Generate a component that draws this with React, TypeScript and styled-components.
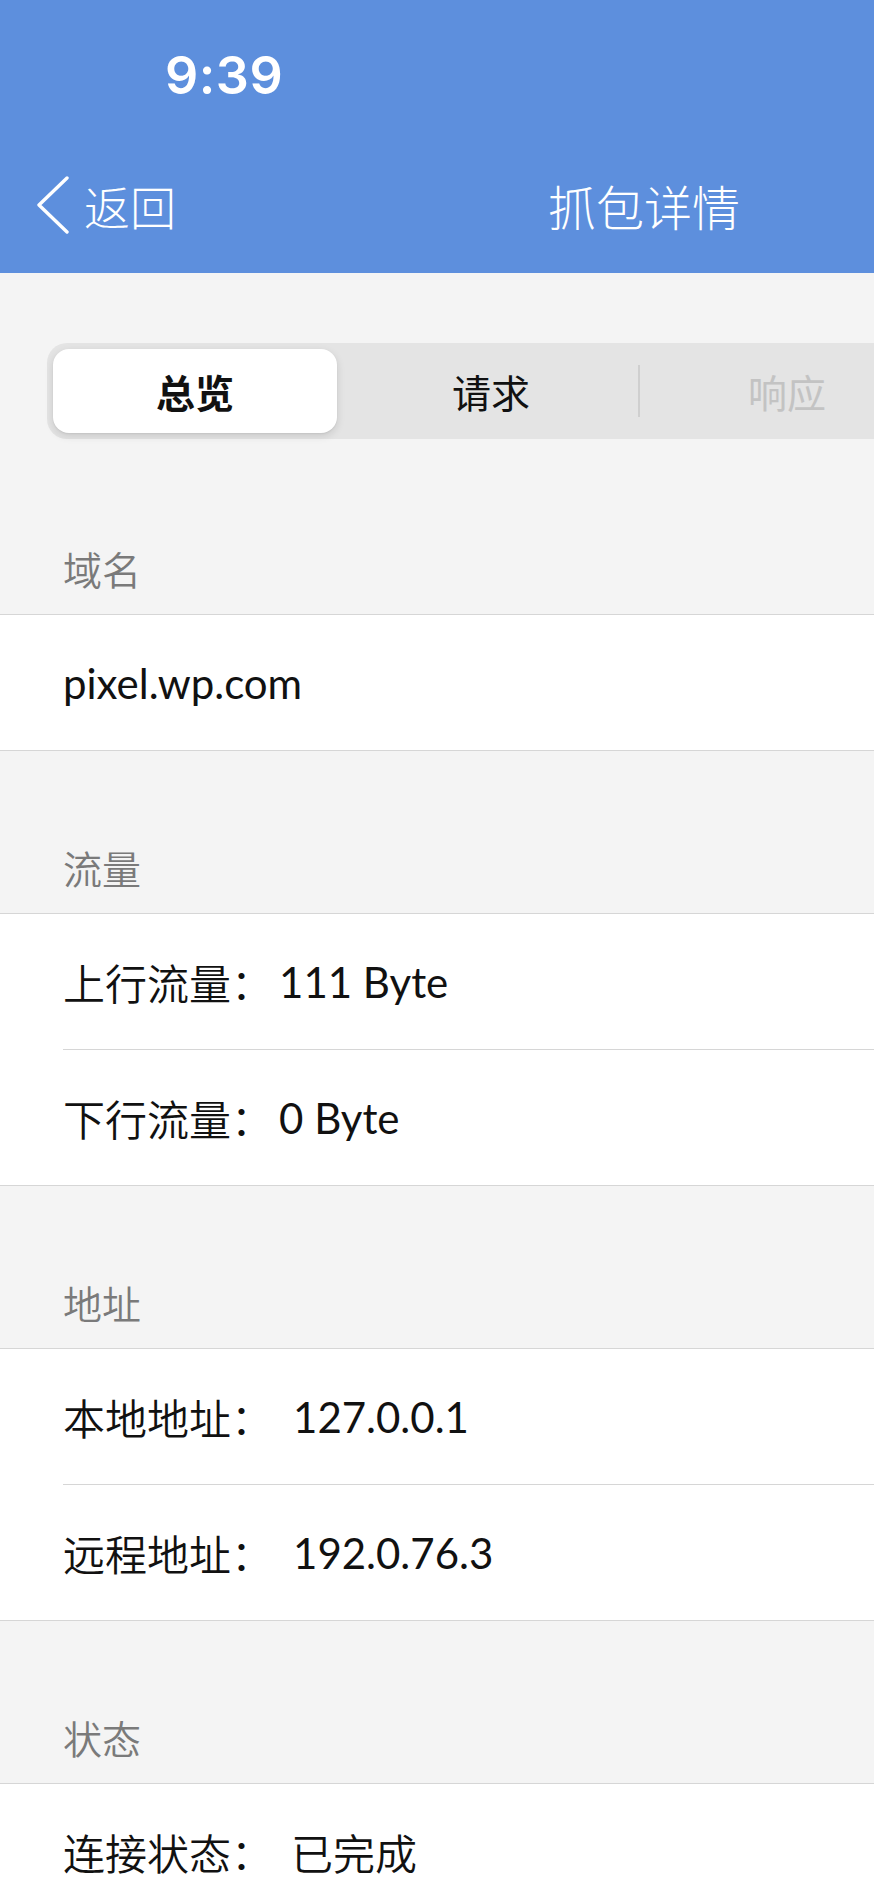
import styled, { createGlobalStyle } from 'styled-components'

const GlobalStyle = createGlobalStyle`
  html, body {
    margin: 0;
    padding: 0;
    background: #f4f4f4;
  }
  body {
    font-family: "Lato", "Noto Sans CJK SC", sans-serif;
    -webkit-font-smoothing: antialiased;
  }
`

const cjk = `"Noto Sans CJK SC", "Noto Sans", sans-serif`

const Page = styled.div`
  width: 874px;
  min-height: 1892px;
  overflow: hidden;
  background: #f4f4f4;
`

const Header = styled.header`
  background: #5d8fdd;
  height: 273px;
  display: flex;
  flex-direction: column;
  color: #fff;
`

const StatusBar = styled.div`
  height: 152px;
  display: flex;
  align-items: center;
  padding-left: 165px;
`

const Time = styled.span`
  font-family: "Inter", sans-serif;
  font-size: 52px;
  font-weight: 600;
  letter-spacing: 0.5px;
  line-height: 1;
`

const NavBar = styled.div`
  height: 106px;
  display: flex;
  align-items: center;
`

const BackButton = styled.div`
  display: flex;
  align-items: center;
  padding-left: 36px;
  gap: 14px;
  font-family: ${cjk};
  font-size: 46px;
  font-weight: 300;
  line-height: 1;
`

const Title = styled.div`
  margin-left: auto;
  margin-right: 134px;
  font-family: ${cjk};
  font-size: 48px;
  font-weight: 300;
  line-height: 1;
`

const Segmented = styled.div`
  margin: 70px 0 13px 47px;
  width: 888px;
  height: 96px;
  box-sizing: border-box;
  padding: 6px 0;
  border-radius: 20px;
  background: #e4e4e4;
  display: grid;
  grid-template-columns: repeat(3, 296px);
  align-items: center;
`

const Segment = styled.div<{ $active?: boolean; $disabled?: boolean; $divider?: boolean }>`
  position: relative;
  height: 84px;
  margin: 0 6px;
  display: flex;
  align-items: center;
  justify-content: center;
  font-family: ${cjk};
  font-size: 39px;
  line-height: 1;
  font-weight: ${(p) => (p.$active ? 700 : 400)};
  color: ${(p) => (p.$disabled ? '#c3c3c3' : '#111')};
  background: ${(p) => (p.$active ? '#fff' : 'transparent')};
  border-radius: 16px;
  box-shadow: ${(p) => (p.$active ? '0 3px 8px rgba(0,0,0,0.12), 0 1px 2px rgba(0,0,0,0.06)' : 'none')};

  &::before {
    content: '';
    display: ${(p) => (p.$divider ? 'block' : 'none')};
    position: absolute;
    left: -7px;
    top: 16px;
    width: 2px;
    height: 52px;
    background: #cfcfcf;
  }
`

const SectionTitle = styled.div`
  height: 162px;
  display: flex;
  align-items: flex-end;
  box-sizing: border-box;
  padding: 0 0 26px 63px;
  font-family: ${cjk};
  font-size: 39px;
  font-weight: 350;
  line-height: 1;
  color: #7a7a7a;
`

const Group = styled.div`
  background: #fff;
  border-top: 1px solid #d6d6d6;
  border-bottom: 1px solid #d6d6d6;
`

const Row = styled.div`
  height: 135px;
  display: flex;
  align-items: center;
  padding-left: 63px;
  font-size: 42px;
  line-height: 1;
  color: #111;

  & + & {
    border-top: 1px solid #d6d6d6;
    margin-left: 63px;
    padding-left: 0;
  }
`

const Label = styled.span`
  font-family: ${cjk};
  font-weight: 350;
`

const Value = styled.span<{ $gap: number; $cjk?: boolean }>`
  margin-left: ${(p) => p.$gap}px;
  font-family: ${(p) => (p.$cjk ? cjk : `"Lato", ${cjk}`)};
  font-weight: ${(p) => (p.$cjk ? 350 : 400)};
`

const sections = [
  { title: '域名', rows: [{ label: '', value: 'pixel.wp.com', gap: 0 }] },
  {
    title: '流量',
    rows: [
      { label: '上行流量：', value: '111 Byte', gap: 6 },
      { label: '下行流量：', value: '0 Byte', gap: 6 },
    ],
  },
  {
    title: '地址',
    rows: [
      { label: '本地地址：', value: '127.0.0.1', gap: 20 },
      { label: '远程地址：', value: '192.0.76.3', gap: 20 },
    ],
  },
  { title: '状态', rows: [{ label: '连接状态：', value: '已完成', gap: 18, cjk: true }] },
]

export default function App() {
  return (
    <Page>
      <GlobalStyle />
      <Header>
        <StatusBar>
          <Time>9:39</Time>
        </StatusBar>
        <NavBar>
          <BackButton>
            <svg width="34" height="58" viewBox="0 0 34 58" fill="none">
              <polyline points="31,2 3,29 31,56" stroke="#fff" strokeWidth="3.4" strokeLinecap="round" strokeLinejoin="round" />
            </svg>
            <span>返回</span>
          </BackButton>
          <Title>抓包详情</Title>
        </NavBar>
      </Header>

      <Segmented>
        <Segment $active>总览</Segment>
        <Segment>请求</Segment>
        <Segment $disabled $divider>响应</Segment>
      </Segmented>

      {sections.map((s) => (
        <div key={s.title}>
          <SectionTitle>{s.title}</SectionTitle>
          <Group>
            {s.rows.map((r) => (
              <Row key={r.value}>
                {r.label && <Label>{r.label}</Label>}
                <Value $gap={r.gap} $cjk={'cjk' in r ? r.cjk : false}>
                  {r.value}
                </Value>
              </Row>
            ))}
          </Group>
        </div>
      ))}
    </Page>
  )
}
